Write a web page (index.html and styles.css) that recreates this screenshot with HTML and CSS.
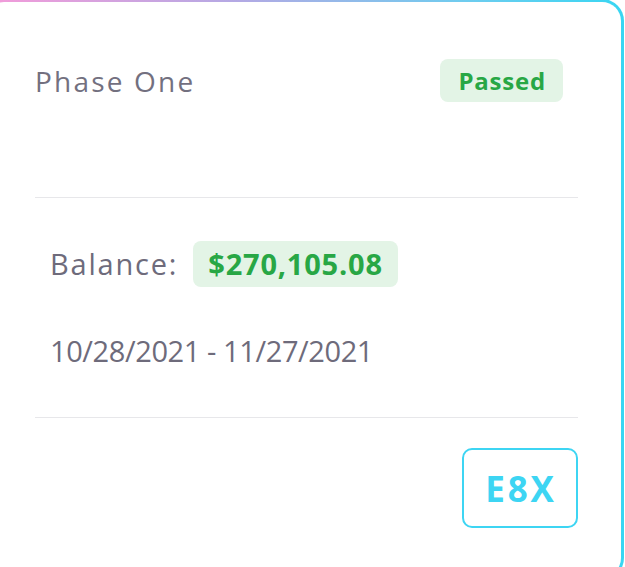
FILE: index.html
```html
<!DOCTYPE html>
<html lang="en">
<head>
<meta charset="utf-8">
<title>Phase One</title>
<link rel="stylesheet" href="styles.css">
</head>
<body>
<div class="card">
  <div class="card-inner">
    <div class="header">
      <span class="title">Phase One</span>
      <span class="badge-passed">Passed</span>
    </div>
    <hr class="divider">
    <div class="details">
      <div class="balance-row">
        <span class="balance-label">Balance:</span>
        <span class="balance-value">$270,105.08</span>
      </div>
      <div class="dates">10/28/2021 - 11/27/2021</div>
    </div>
    <hr class="divider">
    <div class="footer">
      <button class="code-btn">E8X</button>
    </div>
  </div>
</div>
</body>
</html>
```
FILE: styles.css
```css
html, body {
  margin: 0;
  padding: 0;
  background: #ffffff;
  overflow: hidden;
}
body {
  font-family: "Open Sans", "DejaVu Sans", sans-serif;
  color: #6e6b7b;
  width: 625px;
  height: 567px;
}
.card {
  margin: -1px 0 0 -18px;
  width: 642px;
  padding: 3px;
  box-sizing: border-box;
  border-radius: 22px;
  background: linear-gradient(90deg, #f59bd9 0%, #b3a9e4 40%, #6fccef 75%, #38d6f2 100%);
}
.card-inner {
  background: #ffffff;
  border-radius: 19px;
  padding: 57px 43px 49px 50px;
}
.header {
  display: flex;
  justify-content: space-between;
  align-items: center;
  padding-right: 15px;
  height: 43px;
}
.title {
  font-size: 28px;
  letter-spacing: 2.2px;
  color: #73707f;
  line-height: 36px;
}
.badge-passed {
  background: #e3f4e6;
  color: #28a745;
  font-weight: 700;
  font-size: 24px;
  letter-spacing: 0.8px;
  height: 43px;
  line-height: 43px;
  padding: 0 17px 0 18px;
  border-radius: 8px;
}
.divider {
  border: none;
  border-top: 1px solid #e7e7ea;
  margin: 95px 0 0 0;
}
.details {
  padding: 43px 15px 0 15px;
}
.balance-row {
  display: flex;
  align-items: center;
  gap: 15px;
}
.balance-label {
  font-size: 29px;
  letter-spacing: 1.8px;
  line-height: 36px;
}
.balance-value {
  background: #e3f4e6;
  color: #28a745;
  font-weight: 700;
  font-size: 29px;
  letter-spacing: 0.8px;
  height: 46px;
  line-height: 46px;
  padding: 0 15px;
  border-radius: 8px;
}
.dates {
  margin-top: 46px;
  font-size: 29px;
  line-height: 36px;
  letter-spacing: -0.4px;
}
.details + .divider {
  margin-top: 48px;
}
.footer {
  display: flex;
  justify-content: flex-end;
  padding-top: 30px;
}
.code-btn {
  width: 116px;
  height: 80px;
  border: 2px solid #3dd5f3;
  border-radius: 10px;
  background: #ffffff;
  color: #3dd5f3;
  font-family: "Open Sans", "DejaVu Sans", sans-serif;
  font-weight: 700;
  font-size: 35px;
  letter-spacing: 2.8px;
  padding: 0 0 0 2px;
}
```
